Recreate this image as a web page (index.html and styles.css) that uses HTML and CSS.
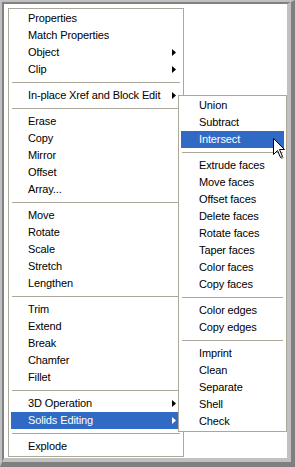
FILE: index.html
```html
<!DOCTYPE html>
<html>
<head>
<meta charset="utf-8">
<link rel="stylesheet" href="styles.css">
</head>
<body>
<div class="frame">
  <div class="inner">
    <div class="menu main">
      <div class="item">Properties</div>
      <div class="item">Match Properties</div>
      <div class="item sub"><span class="label">Object</span><svg class="arrow" width="4" height="7" viewBox="0 0 4 7"><polygon points="0,0 4,3.5 0,7" fill="currentColor"/></svg></div>
      <div class="item sub"><span class="label">Clip</span><svg class="arrow" width="4" height="7" viewBox="0 0 4 7"><polygon points="0,0 4,3.5 0,7" fill="currentColor"/></svg></div>
      <div class="sep"></div>
      <div class="item sub"><span class="label">In-place Xref and Block Edit</span><svg class="arrow" width="4" height="7" viewBox="0 0 4 7"><polygon points="0,0 4,3.5 0,7" fill="currentColor"/></svg></div>
      <div class="sep"></div>
      <div class="item">Erase</div>
      <div class="item">Copy</div>
      <div class="item">Mirror</div>
      <div class="item">Offset</div>
      <div class="item">Array...</div>
      <div class="sep"></div>
      <div class="item">Move</div>
      <div class="item">Rotate</div>
      <div class="item">Scale</div>
      <div class="item">Stretch</div>
      <div class="item">Lengthen</div>
      <div class="sep"></div>
      <div class="item">Trim</div>
      <div class="item">Extend</div>
      <div class="item">Break</div>
      <div class="item">Chamfer</div>
      <div class="item">Fillet</div>
      <div class="sep"></div>
      <div class="item sub"><span class="label">3D Operation</span><svg class="arrow" width="4" height="7" viewBox="0 0 4 7"><polygon points="0,0 4,3.5 0,7" fill="currentColor"/></svg></div>
      <div class="item sub active"><span class="label">Solids Editing</span><svg class="arrow" width="4" height="7" viewBox="0 0 4 7"><polygon points="0,0 4,3.5 0,7" fill="currentColor"/></svg></div>
      <div class="sep"></div>
      <div class="item">Explode</div>
    </div>

    <div class="menu submenu">
      <div class="item">Union</div>
      <div class="item">Subtract</div>
      <div class="item active">Intersect</div>
      <div class="sep"></div>
      <div class="item">Extrude faces</div>
      <div class="item">Move faces</div>
      <div class="item">Offset faces</div>
      <div class="item">Delete faces</div>
      <div class="item">Rotate faces</div>
      <div class="item">Taper faces</div>
      <div class="item">Color faces</div>
      <div class="item">Copy faces</div>
      <div class="sep"></div>
      <div class="item">Color edges</div>
      <div class="item">Copy edges</div>
      <div class="sep"></div>
      <div class="item">Imprint</div>
      <div class="item">Clean</div>
      <div class="item">Separate</div>
      <div class="item">Shell</div>
      <div class="item">Check</div>
    </div>

    <svg class="cursor" width="13" height="22" viewBox="0 0 13 22">
      <polygon points="0.5,0.5 0.5,16.5 4.5,12.5 7.5,19.5 9.5,18.5 6.5,11.5 11.5,11.5" fill="#fff" stroke="#000" stroke-width="1"/>
      <polygon points="8,20 10.5,19 10.5,20 8,21" fill="#777"/>
    </svg>
  </div>
</div>
</body>
</html>
```

FILE: styles.css
```css
html, body {
  margin: 0;
  padding: 0;
  background: #ffffff;
}

.frame {
  width: 295px;
  height: 467px;
  box-sizing: border-box;
  border-top: 2px solid #c0c0c0;
  border-left: 2px solid #c0c0c0;
  border-right: 4px solid #7f7f7f;
  border-bottom: 5px solid #7f7f7f;
}

.inner {
  position: relative;
  height: 100%;
  box-sizing: border-box;
  border-top: 2px solid #808080;
  border-left: 2px solid #808080;
  border-right: 4px solid #c0c0c0;
  border-bottom: 4px solid #c0c0c0;
  background: #ffffff;
  padding: 4px;
}

.menu {
  background: #ffffff;
  border: 1px solid #aca899;
  padding: 1px 2px;
  font-family: "Liberation Sans", Arial, sans-serif;
  font-size: 11px;
  letter-spacing: -0.12px;
  color: #000000;
  box-sizing: border-box;
}

.main {
  width: 176px;
}

.submenu {
  position: absolute;
  left: 174px;
  top: 91px;
  width: 109px;
}

.item {
  height: 17px;
  line-height: 17px;
  padding-left: 17px;
  display: flex;
  align-items: center;
  white-space: nowrap;
}

.submenu .item {
  padding-left: 18px;
}

.item .label {
  flex: 1;
}

.arrow {
  display: block;
  margin-right: 5px;
  color: #000000;
}

.item.active {
  background: #316ac5;
  color: #ffffff;
}

.item.active .arrow {
  color: #ffffff;
}

.sep {
  height: 1px;
  margin: 4px 1px;
  background: #aca899;
}

.cursor {
  position: absolute;
  left: 269px;
  top: 134px;
}
```
